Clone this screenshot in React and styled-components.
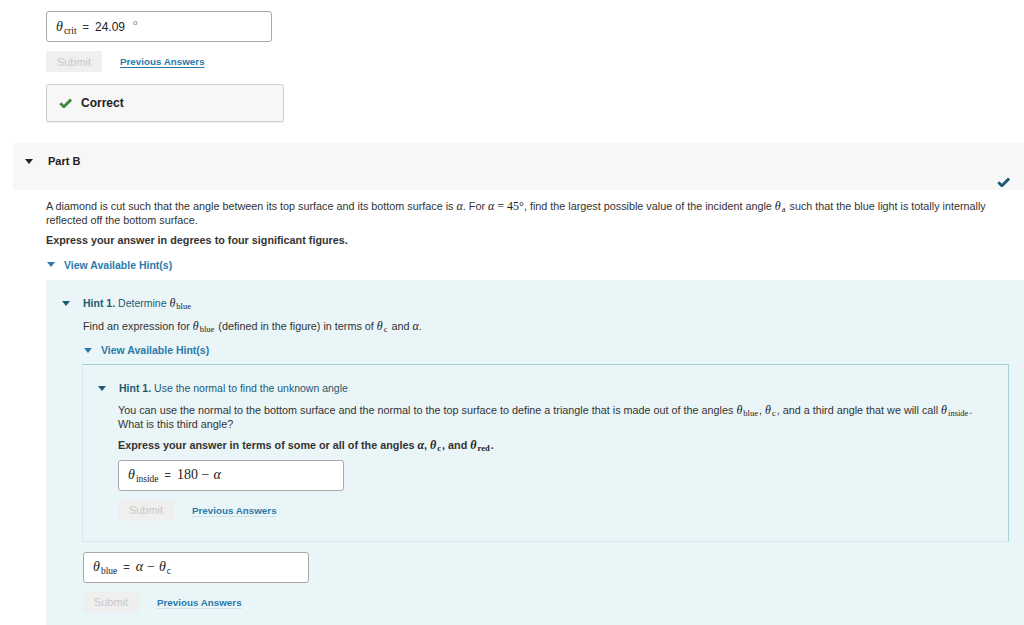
import styled, { createGlobalStyle } from "styled-components";

const GlobalStyle = createGlobalStyle`
  html, body {
    margin: 0;
    padding: 0;
    background: #fff;
  }
  body {
    font-family: "Liberation Sans", Arial, sans-serif;
    font-size: 11px;
    color: #333;
  }
`;

const Page = styled.div`
  width: 1024px;
  height: 625px;
  overflow: hidden;
`;

const TopSection = styled.div`
  padding: 11px 0 0 46px;
`;

const AnswerBox = styled.div`
  box-sizing: border-box;
  width: 226px;
  height: 31px;
  border: 1px solid #a9a9a9;
  border-radius: 3px;
  background: #fff;
  display: flex;
  align-items: center;
  padding-left: 9px;
  gap: 4px;
  margin-top: ${(p) => p.$top || 0}px;
`;

const Var = styled.span`
  font-family: "Liberation Serif", "Times New Roman", serif;
  font-style: italic;
  font-size: 14px;
  color: #222;
`;

const Sub = styled.span`
  font-family: "Liberation Serif", "Times New Roman", serif;
  font-style: normal;
  font-size: 9.5px;
  position: relative;
  top: 3px;
  margin-left: 1px;
  color: #222;
`;

const Num = styled.span`
  font-family: "Liberation Serif", "Times New Roman", serif;
  font-size: 14px;
  color: #222;
`;

const Eq = styled.span`
  font-size: 11px;
  color: #333;
  margin: 0 2px;
`;

const Plain = styled.span`
  font-size: 12px;
  color: #222;
`;

const Degree = styled.span`
  font-size: 8px;
  color: #777;
  position: relative;
  top: -4px;
  margin-left: 4px;
`;

const ButtonRow = styled.div`
  display: flex;
  align-items: center;
  gap: 18px;
  margin-top: 9px;
`;

const SubmitButton = styled.button`
  width: 56px;
  height: 21px;
  border: none;
  border-radius: 2px;
  background: #efefef;
  color: #c9c9c9;
  font-family: "Liberation Sans", Arial, sans-serif;
  font-size: 11px;
  padding: 0;
`;

const Link = styled.a`
  color: #2b7aab;
  font-weight: bold;
  font-size: 9.8px;
  text-decoration: underline;
  text-decoration-color: ${(p) => (p.$faint ? "#cfe3ec" : "#2b7aab")};
  text-underline-offset: 2px;
  cursor: pointer;
`;

const CorrectBox = styled.div`
  box-sizing: border-box;
  width: 238px;
  height: 38px;
  margin-top: 12px;
  border: 1px solid #cdcdcd;
  border-radius: 3px;
  background: #f7f7f7;
  box-shadow: 0 1px 1px rgba(0, 0, 0, 0.08);
  display: flex;
  align-items: center;
  gap: 9px;
  padding-left: 12px;
  font-weight: bold;
  font-size: 12px;
  color: #222;
`;

const PartHeader = styled.div`
  margin: 21px 0 0 13px;
  height: 47px;
  box-sizing: border-box;
  background: #f7f7f7;
  display: flex;
  justify-content: space-between;
  padding: 11px 14px 3px 12px;
`;

const HeaderTitle = styled.div`
  display: flex;
  align-items: center;
  gap: 15px;
  height: 14px;
  font-weight: bold;
  font-size: 11px;
  color: #222;
`;

const StatusCheck = styled.div`
  align-self: flex-end;
  display: flex;
`;

const Caret = styled.span`
  width: 0;
  height: 0;
  border-left: 4px solid transparent;
  border-right: 4px solid transparent;
  border-top: 5px solid ${(p) => p.$color || "#222"};
  display: inline-block;
`;

const PartBody = styled.div`
  padding: 10px 20px 0 46px;
`;

const Paragraph = styled.p`
  margin: 0 0 ${(p) => p.$gap ?? 9}px 0;
  line-height: 12.5px;
  font-size: 10.8px;
  font-weight: ${(p) => (p.$bold ? "bold" : "normal")};
  color: #333;
`;

const InlineVar = styled(Var)`
  font-size: 12px;
`;

const InlineNum = styled(Num)`
  font-size: 12px;
`;

const InlineSub = styled(Sub)`
  font-size: 8.5px;
  top: 2px;
  margin-right: 1px;
`;

const HintToggle = styled.div`
  display: flex;
  align-items: center;
  gap: 9px;
  height: 14px;
  color: #2b7aab;
  font-weight: bold;
  font-size: 10.5px;
  padding-left: 1px;
`;

const HintPanel = styled.div`
  margin: 8px 0 0 46px;
  background: #eaf5f7;
  padding: 17px 15px 13px 16px;
`;

const HintTitle = styled.div`
  display: flex;
  align-items: center;
  gap: 13px;
  height: 14px;
  color: #1d5b73;
  font-size: 10.5px;
  b {
    margin-right: 3px;
  }
`;

const HintContent = styled.div`
  padding-left: ${(p) => p.$indent ?? 21}px;
  margin-top: 9px;
`;

const NestedHint = styled.div`
  margin: 7px 0 0 -1px;
  border-top: 1px solid #a4d2da;
  border-right: 1px solid #a4d2da;
  border-left: 1px solid #d3e9ee;
  border-bottom: 1px solid #d3e9ee;
  padding: 16px 30px 20px 15px;
`;

const CheckIcon = ({ size, color }) => (
  <svg width={size} height={size * 0.8} viewBox="0 0 20 16">
    <path
      d="M2 8 L7.5 13.5 L18.5 2.5"
      fill="none"
      stroke={color}
      strokeWidth="4.4"
      strokeLinejoin="miter"
    />
  </svg>
);

const Theta = ({ sub }) => (
  <>
    <InlineVar>θ</InlineVar>
    <InlineSub>{sub}</InlineSub>
  </>
);

const Alpha = () => <InlineVar>α</InlineVar>;

const App = () => {
  return (
    <Page>
      <GlobalStyle />
      <TopSection>
        <AnswerBox>
          <span>
            <Var>θ</Var>
            <Sub>crit</Sub>
          </span>
          <Eq>=</Eq>
          <Plain>24.09</Plain>
          <Degree>o</Degree>
        </AnswerBox>
        <ButtonRow>
          <SubmitButton>Submit</SubmitButton>
          <Link>Previous Answers</Link>
        </ButtonRow>
        <CorrectBox>
          <CheckIcon size={13} color="#3d8b40" />
          Correct
        </CorrectBox>
      </TopSection>

      <PartHeader>
        <HeaderTitle>
          <Caret />
          Part B
        </HeaderTitle>
        <StatusCheck>
          <CheckIcon size={13} color="#1f5a72" />
        </StatusCheck>
      </PartHeader>

      <PartBody>
        <Paragraph $gap={8}>
          A diamond is cut such that the angle between its top surface and its
          bottom surface is <Alpha />. For <Alpha /> <InlineNum>= 45°</InlineNum>,
          find the largest possible value of the incident angle <Theta sub="a" />{" "}
          such that the blue light is totally internally reflected off the
          bottom surface.
        </Paragraph>
        <Paragraph $bold $gap={11}>
          Express your answer in degrees to four significant figures.
        </Paragraph>
        <HintToggle>
          <Caret $color="#2b7aab" />
          View Available Hint(s)
        </HintToggle>
      </PartBody>

      <HintPanel>
        <HintTitle>
          <Caret $color="#1d5b73" />
          <span>
            <b>Hint 1.</b>Determine <Theta sub="blue" />
          </span>
        </HintTitle>
        <HintContent>
          <Paragraph $gap={10}>
            Find an expression for <Theta sub="blue" /> (defined in the figure)
            in terms of <Theta sub="c" /> and <Alpha />.
          </Paragraph>
          <HintToggle>
            <Caret $color="#2b7aab" />
            View Available Hint(s)
          </HintToggle>

          <NestedHint>
            <HintTitle>
              <Caret $color="#1d5b73" />
              <span>
                <b>Hint 1.</b>Use the normal to find the unknown angle
              </span>
            </HintTitle>
            <HintContent $indent={20}>
              <Paragraph $gap={9}>
                You can use the normal to the bottom surface and the normal to
                the top surface to define a triangle that is made out of the
                angles <Theta sub="blue" />, <Theta sub="c" />, and a third angle
                that we will call <Theta sub="inside" />. What is this third
                angle?
              </Paragraph>
              <Paragraph $bold $gap={7}>
                Express your answer in terms of some or all of the angles{" "}
                <Alpha />, <Theta sub="c" />, and <Theta sub="red" />.
              </Paragraph>
              <AnswerBox>
                <span>
                  <Var>θ</Var>
                  <Sub>inside</Sub>
                </span>
                <Eq>=</Eq>
                <Num>180 −</Num>
                <Var>α</Var>
              </AnswerBox>
              <ButtonRow>
                <SubmitButton>Submit</SubmitButton>
                <Link $faint>Previous Answers</Link>
              </ButtonRow>
            </HintContent>
          </NestedHint>

          <AnswerBox $top={10}>
            <span>
              <Var>θ</Var>
              <Sub>blue</Sub>
            </span>
            <Eq>=</Eq>
            <Var>α</Var>
            <Num>−</Num>
            <span>
              <Var>θ</Var>
              <Sub>c</Sub>
            </span>
          </AnswerBox>
          <ButtonRow>
            <SubmitButton>Submit</SubmitButton>
            <Link $faint>Previous Answers</Link>
          </ButtonRow>
        </HintContent>
      </HintPanel>
    </Page>
  );
};

export default App;
